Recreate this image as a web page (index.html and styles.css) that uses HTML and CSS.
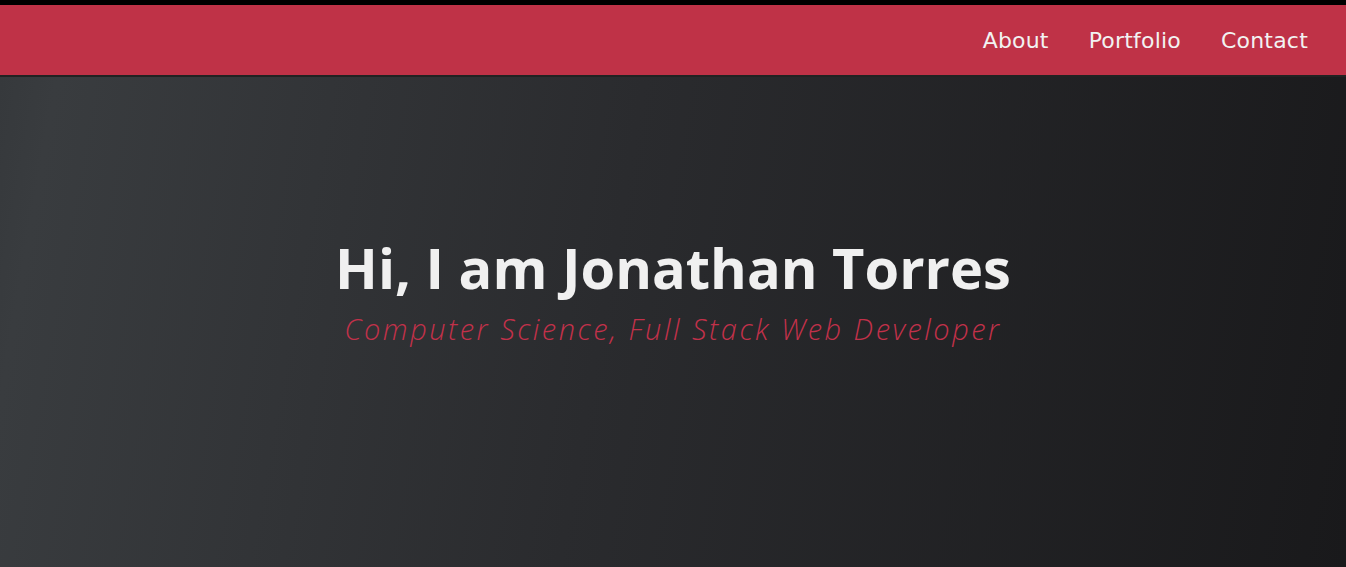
FILE: index.html
```html
<!DOCTYPE html>
<html lang="en">
<head>
<meta charset="utf-8">
<title>Jonathan Torres</title>
<link rel="stylesheet" href="styles.css">
</head>
<body>
<div class="topstrip"></div>
<header class="navbar">
  <nav class="nav">
    <a class="nav-link" href="#about">About</a>
    <a class="nav-link" href="#portfolio">Portfolio</a>
    <a class="nav-link" href="#contact">Contact</a>
  </nav>
</header>
<main class="hero">
  <div class="hero-text">
    <h1 class="hero-title">Hi, I am Jonathan Torres</h1>
    <p class="hero-subtitle">Computer Science, Full Stack Web Developer</p>
  </div>
</main>
</body>
</html>
```
FILE: styles.css
```css
* { box-sizing: border-box; }
html, body { margin: 0; padding: 0; height: 100%; }
body {
  background: #1b1b1d;
  font-family: "Open Sans", "Liberation Sans", sans-serif;
  display: flex;
  flex-direction: column;
  overflow: hidden;
}
.topstrip {
  height: 5px;
  background: #000;
  flex: none;
}
.navbar {
  flex: none;
  height: 72px;
  background: #bf3247;
  border-bottom: 2px solid #222;
  display: flex;
  justify-content: flex-end;
  align-items: center;
  padding-right: 38px;
}
.nav {
  display: flex;
  gap: 40px;
  padding-top: 0;
}
.nav-link {
  color: #f2f2f2;
  text-decoration: none;
  font-family: "DejaVu Sans", "Open Sans", sans-serif;
  font-size: 22px;
  letter-spacing: 0.2px;
  font-weight: 400;
}
.hero {
  flex: 1;
  background: linear-gradient(100deg, #36393c 0%, #393c3f 4%, #2a2b2e 45%, #19191b 100%);
  display: flex;
  justify-content: center;
}
.hero-text {
  text-align: center;
  padding-top: 155px;
}
.hero-title {
  margin: 0;
  color: #f0f0f0;
  font-family: "Open Sans", "Liberation Sans", sans-serif;
  font-weight: 700;
  font-size: 56px;
  letter-spacing: 0;
  line-height: 70px;
}
.hero-subtitle {
  margin: 7px 0 0;
  color: #c2314a;
  font-family: "Open Sans", "Liberation Sans", sans-serif;
  font-style: italic;
  font-weight: 300;
  font-size: 29px;
  letter-spacing: 2.5px;
  line-height: 40px;
}
```
